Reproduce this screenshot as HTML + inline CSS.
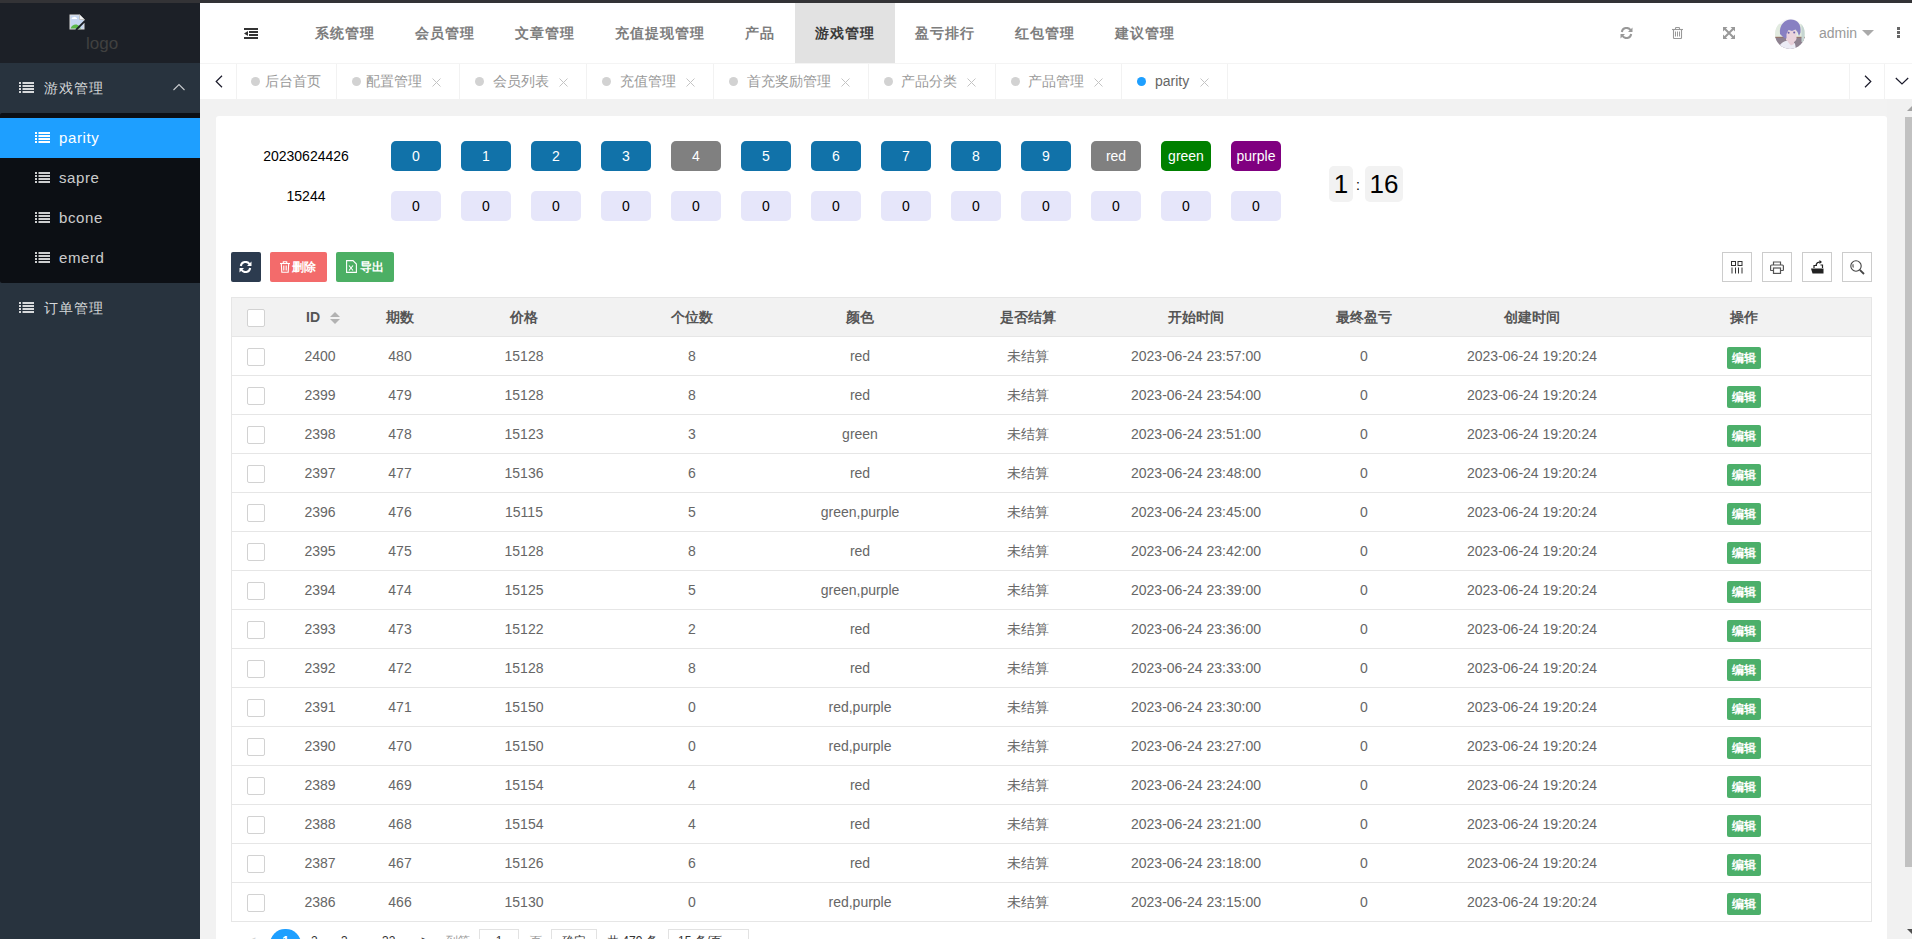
<!DOCTYPE html><html><head><meta charset="utf-8"><title>admin</title><style>
*{box-sizing:border-box;margin:0;padding:0}
html,body{width:1912px;height:939px;overflow:hidden;background:#f2f2f2;font-family:"Liberation Sans",sans-serif;font-size:14px;color:#666;position:relative}
.a{position:absolute}
.topbar{left:0;top:0;width:1912px;height:3px;background:#333336}
.side{left:0;top:3px;width:200px;height:936px;background:#28333e}
.logo{left:0;top:0;width:200px;height:60px;background:#1c2027}
.logo .t{left:86px;top:31px;font-size:17px;color:#404040;line-height:20px}
.mi{left:0;width:200px;height:50px;color:rgba(255,255,255,.82)}
.mi svg{position:absolute;left:19px;top:19px}
.mi .tx{position:absolute;left:44px;top:0;line-height:50px;font-size:14px;letter-spacing:1px;white-space:nowrap}
.child{left:0;top:110px;width:200px;height:170px;background:#0c0f14;border-radius:2px 0 0 2px}
.ci{left:0;width:200px;height:40px;color:rgba(255,255,255,.8)}
.ci svg{position:absolute;left:35px;top:14px}
.ci .tx{position:absolute;left:59px;top:0;line-height:40px;font-size:15px;letter-spacing:.6px}
.ci.on{background:#1e9fff;color:#fff}
.hdr{left:200px;top:3px;width:1712px;height:60px;background:#fff}
.nav{top:0;height:60px;line-height:60px;font-size:14px;letter-spacing:1px;font-weight:700;color:#7d7d7d;white-space:nowrap;text-align:center}
.nav.on{background:#e2e2e2;color:#3a3a3a}
.tabs{left:200px;top:63px;width:1712px;height:36px;background:#fff;border-top:1px solid #f4f4f4}
.sep{top:0;width:1px;height:35px;background:#f2f2f2}
.tab{top:0;height:35px;line-height:35px;white-space:nowrap;color:#999;font-size:14px}
.dot{width:9px;height:9px;border-radius:50%;background:#d2d2d2;top:13px}
.x{top:0;line-height:35px;color:#bbb;font-size:13px}
.card{left:216px;top:116px;width:1671px;height:900px;background:#fff;border-radius:3px}
.nb{width:50px;height:30px;border-radius:5px;text-align:center;line-height:30px;color:#fff;font-size:14px}
.nl{width:50px;height:30px;border-radius:5px;text-align:center;line-height:30px;color:#000;font-size:14px;background:#e6e6fa}
.btn{height:30px;line-height:30px;border-radius:2px;color:#fff;font-size:12px;white-space:nowrap;font-weight:bold}
.tool{width:30px;height:30px;border:1px solid #ccc;background:#fff}
.tbl{left:231px;top:297px;width:1641px;height:625px;border:1px solid #e6e6e6;background:#fff}
.th{left:0;top:0;width:1639px;height:39px;background:#f2f2f2;border-bottom:1px solid #e6e6e6}
.hc{top:0;height:38px;line-height:38px;text-align:center;font-weight:bold;color:#555;white-space:nowrap}
.row{left:0;width:1639px;height:39px;border-bottom:1px solid #e6e6e6}
.c{top:0;height:38px;line-height:38px;text-align:center;color:#666;white-space:nowrap}
.cb{width:18px;height:18px;border:1px solid #d2d2d2;border-radius:2px;background:#fff}
.edit{width:34px;height:22px;line-height:22px;background:#4caf6a;color:#fff;border-radius:2px;font-size:12px;text-align:center;font-weight:bold}
</style></head><body>
<div class="a topbar"></div>
<div class="a side">
<div class="a logo">
<svg class="a" style="left:69px;top:11px" width="16" height="16" viewBox="0 0 16 16"><path d="M0.5 0.5H10.5L15.5 5.5V15.5H0.5Z" fill="#dcdcdc"/><path d="M1.5 1.5H10V6H14.5V14.5H1.5Z" fill="#c5d6f0"/><path d="M1.5 14.5C3 10 8 9.5 10 12L12 14.5Z" fill="#5cb848"/><path d="M2.5 5C2.8 3.6 3.8 3 4.6 3.3C5.2 2.4 6.6 2.6 7 3.6C7.8 3.5 8.3 4.3 8 5Z" fill="#fff"/><path d="M10.5 0.5V5.5H15.5" fill="#f4f4f4" stroke="#aaa" stroke-width=".6"/><path d="M7 16L16 7" stroke="#1c2027" stroke-width="1.8"/></svg>
<div class="a t">logo</div>
</div>
<div class="a mi" style="top:60px"><svg width="15" height="11" viewBox="0 0 15 11"><g fill="currentColor"><rect x="0" y="0" width="2" height="2"/><rect x="3.5" y="0" width="11.5" height="2"/><rect x="0" y="3" width="2" height="2"/><rect x="3.5" y="3" width="11.5" height="2"/><rect x="0" y="6" width="2" height="2"/><rect x="3.5" y="6" width="11.5" height="2"/><rect x="0" y="9" width="2" height="2"/><rect x="3.5" y="9" width="11.5" height="2"/></g></svg><span class="tx">游戏管理</span><svg class="a" style="left:172px;top:20px" width="13" height="8" viewBox="0 0 13 8"><path d="M1.5 7L7 1.5L12.5 7" fill="none" stroke="rgba(255,255,255,.75)" stroke-width="1.1"/></svg></div>
<div class="a child">
<div class="a ci on" style="top:5px"><svg width="15" height="11" viewBox="0 0 15 11"><g fill="currentColor"><rect x="0" y="0" width="2" height="2"/><rect x="3.5" y="0" width="11.5" height="2"/><rect x="0" y="3" width="2" height="2"/><rect x="3.5" y="3" width="11.5" height="2"/><rect x="0" y="6" width="2" height="2"/><rect x="3.5" y="6" width="11.5" height="2"/><rect x="0" y="9" width="2" height="2"/><rect x="3.5" y="9" width="11.5" height="2"/></g></svg><span class="tx">parity</span></div>
<div class="a ci" style="top:45px"><svg width="15" height="11" viewBox="0 0 15 11"><g fill="currentColor"><rect x="0" y="0" width="2" height="2"/><rect x="3.5" y="0" width="11.5" height="2"/><rect x="0" y="3" width="2" height="2"/><rect x="3.5" y="3" width="11.5" height="2"/><rect x="0" y="6" width="2" height="2"/><rect x="3.5" y="6" width="11.5" height="2"/><rect x="0" y="9" width="2" height="2"/><rect x="3.5" y="9" width="11.5" height="2"/></g></svg><span class="tx">sapre</span></div>
<div class="a ci" style="top:85px"><svg width="15" height="11" viewBox="0 0 15 11"><g fill="currentColor"><rect x="0" y="0" width="2" height="2"/><rect x="3.5" y="0" width="11.5" height="2"/><rect x="0" y="3" width="2" height="2"/><rect x="3.5" y="3" width="11.5" height="2"/><rect x="0" y="6" width="2" height="2"/><rect x="3.5" y="6" width="11.5" height="2"/><rect x="0" y="9" width="2" height="2"/><rect x="3.5" y="9" width="11.5" height="2"/></g></svg><span class="tx">bcone</span></div>
<div class="a ci" style="top:125px"><svg width="15" height="11" viewBox="0 0 15 11"><g fill="currentColor"><rect x="0" y="0" width="2" height="2"/><rect x="3.5" y="0" width="11.5" height="2"/><rect x="0" y="3" width="2" height="2"/><rect x="3.5" y="3" width="11.5" height="2"/><rect x="0" y="6" width="2" height="2"/><rect x="3.5" y="6" width="11.5" height="2"/><rect x="0" y="9" width="2" height="2"/><rect x="3.5" y="9" width="11.5" height="2"/></g></svg><span class="tx">emerd</span></div>
</div>
<div class="a mi" style="top:280px"><svg width="15" height="11" viewBox="0 0 15 11"><g fill="currentColor"><rect x="0" y="0" width="2" height="2"/><rect x="3.5" y="0" width="11.5" height="2"/><rect x="0" y="3" width="2" height="2"/><rect x="3.5" y="3" width="11.5" height="2"/><rect x="0" y="6" width="2" height="2"/><rect x="3.5" y="6" width="11.5" height="2"/><rect x="0" y="9" width="2" height="2"/><rect x="3.5" y="9" width="11.5" height="2"/></g></svg><span class="tx">订单管理</span></div>
</div>
<div class="a hdr">
<svg class="a" style="left:44px;top:25px" width="14" height="11" viewBox="0 0 14 11"><g fill="#333"><rect x="0" y="0" width="14" height="2"/><rect x="5" y="3" width="9" height="2"/><rect x="5" y="6" width="9" height="2"/><rect x="0" y="9" width="14" height="2"/><path d="M0 5.5L4 3V8Z"/></g></svg>
<div class="a nav" style="left:95px;width:100px">系统管理</div>
<div class="a nav" style="left:195px;width:100px">会员管理</div>
<div class="a nav" style="left:295px;width:100px">文章管理</div>
<div class="a nav" style="left:395px;width:130px">充值提现管理</div>
<div class="a nav" style="left:525px;width:70px">产品</div>
<div class="a nav on" style="left:595px;width:100px">游戏管理</div>
<div class="a nav" style="left:695px;width:100px">盈亏排行</div>
<div class="a nav" style="left:795px;width:100px">红包管理</div>
<div class="a nav" style="left:895px;width:100px">建议管理</div>
<svg class="a" style="left:1420px;top:24px" width="13" height="12" viewBox="0 0 13 12"><g fill="none" stroke="#999" stroke-width="2"><path d="M1.8 5A4.8 4.8 0 0 1 10.6 3.2"/><path d="M11.2 7A4.8 4.8 0 0 1 2.4 8.8"/></g><g fill="#999"><path d="M12.5 0.5V5H8Z"/><path d="M0.5 11.5V7H5Z"/></g></svg>
<svg class="a" style="left:1472px;top:24px" width="12" height="12" viewBox="0 0 12 12"><g fill="none" stroke="#999" stroke-width="1.1"><path d="M0 2.5H11"/><path d="M3.5 2.4V1.3Q3.5 0.5 4.3 0.5H6.7Q7.5 0.5 7.5 1.3V2.4"/><path d="M1.5 2.8V10.8Q1.5 11.5 2.2 11.5H8.8Q9.5 11.5 9.5 10.8V2.8"/><path d="M3.5 4.5V9.5M5.5 4.5V9.5M7.5 4.5V9.5" stroke-width="1"/></g></svg>
<svg class="a" style="left:1523px;top:24px" width="12" height="12" viewBox="0 0 12 12"><g fill="#999"><path d="M0 0H4.5L0 4.5Z"/><path d="M12 0V4.5L7.5 0Z"/><path d="M0 12V7.5L4.5 12Z"/><path d="M12 12H7.5L12 7.5Z"/></g><g stroke="#999" stroke-width="2"><path d="M1.5 1.5L10.5 10.5M10.5 1.5L1.5 10.5"/></g></svg>
<svg class="a" style="left:1575px;top:16px" width="30" height="30" viewBox="0 0 30 30"><defs><clipPath id="cp"><circle cx="15" cy="15" r="15"/></clipPath></defs><g clip-path="url(#cp)"><rect width="30" height="30" fill="#f4f4f6"/><rect x="0" y="5" width="30" height="13.5" fill="#e2ebe0"/><rect x="0" y="18" width="30" height="12" fill="#8e8290"/><rect x="0" y="17.8" width="30" height="0.8" fill="#9a6f58"/><rect x="26.5" y="5" width="3" height="18" fill="#c6d6d2"/><path d="M3 30C4 25 9 22 13 21.5L17 23L20 24.5L21 30Z" fill="#ececf5"/><path d="M12.5 19L19 19L19 25L16 26.5L13 23Z" fill="#e8cfd8"/><path d="M11 12L21.5 11L21.5 20C20.5 23 17.5 24.5 14.5 23.5L11 21Z" fill="#ead3dc"/><path d="M5 15C4 6 9.5 0.5 16 0.5C22.5 0.5 26.5 5.5 25.5 13.5L24 17L22.5 13L20.5 10.5L17 12L13.5 11L11.5 15L11.5 19.5L9 19Z" fill="#8880c2"/><circle cx="13.6" cy="13.8" r="1" fill="#6a62a8"/><circle cx="19.2" cy="13.4" r="1" fill="#6a62a8"/></g></svg>
<div class="a" style="left:1619px;top:0;line-height:60px;font-size:14px;color:#999">admin</div>
<svg class="a" style="left:1662px;top:27px" width="12" height="6" viewBox="0 0 12 6"><path d="M0 0H12L6 6Z" fill="#aaa"/></svg>
<svg class="a" style="left:1697px;top:24px" width="3" height="11" viewBox="0 0 3 11"><g fill="#666"><rect y="0" width="3" height="3"/><rect y="4" width="3" height="3"/><rect y="8" width="3" height="3"/></g></svg>
</div>
<div class="a tabs">
<svg class="a" style="left:15px;top:11px" width="8" height="13" viewBox="0 0 8 13"><path d="M7 0.8L1.2 6.5L7 12.2" fill="none" stroke="#1a1a2a" stroke-width="1.2"/></svg>
<div class="a sep" style="left:36px"></div>
<div class="a sep" style="left:136px"></div>
<div class="a sep" style="left:259px"></div>
<div class="a sep" style="left:386px"></div>
<div class="a sep" style="left:513px"></div>
<div class="a sep" style="left:668px"></div>
<div class="a sep" style="left:795px"></div>
<div class="a sep" style="left:921px"></div>
<div class="a sep" style="left:1027px"></div>
<div class="a sep" style="left:1649px"></div>
<div class="a sep" style="left:1684px"></div>
<div class="a dot" style="left:51px;"></div>
<div class="a tab" style="left:65px;">后台首页</div>
<div class="a dot" style="left:152px;"></div>
<div class="a tab" style="left:166px;">配置管理</div>
<svg class="a" style="left:232px;top:14px" width="9" height="9" viewBox="0 0 9 9"><path d="M0.5 0.5L8.5 8.5M8.5 0.5L0.5 8.5" stroke="#c4c4c4" stroke-width="1"/></svg>
<div class="a dot" style="left:275px;"></div>
<div class="a tab" style="left:293px;">会员列表</div>
<svg class="a" style="left:359px;top:14px" width="9" height="9" viewBox="0 0 9 9"><path d="M0.5 0.5L8.5 8.5M8.5 0.5L0.5 8.5" stroke="#c4c4c4" stroke-width="1"/></svg>
<div class="a dot" style="left:402px;"></div>
<div class="a tab" style="left:420px;">充值管理</div>
<svg class="a" style="left:486px;top:14px" width="9" height="9" viewBox="0 0 9 9"><path d="M0.5 0.5L8.5 8.5M8.5 0.5L0.5 8.5" stroke="#c4c4c4" stroke-width="1"/></svg>
<div class="a dot" style="left:529px;"></div>
<div class="a tab" style="left:547px;">首充奖励管理</div>
<svg class="a" style="left:641px;top:14px" width="9" height="9" viewBox="0 0 9 9"><path d="M0.5 0.5L8.5 8.5M8.5 0.5L0.5 8.5" stroke="#c4c4c4" stroke-width="1"/></svg>
<div class="a dot" style="left:684px;"></div>
<div class="a tab" style="left:701px;">产品分类</div>
<svg class="a" style="left:767px;top:14px" width="9" height="9" viewBox="0 0 9 9"><path d="M0.5 0.5L8.5 8.5M8.5 0.5L0.5 8.5" stroke="#c4c4c4" stroke-width="1"/></svg>
<div class="a dot" style="left:811px;"></div>
<div class="a tab" style="left:828px;">产品管理</div>
<svg class="a" style="left:894px;top:14px" width="9" height="9" viewBox="0 0 9 9"><path d="M0.5 0.5L8.5 8.5M8.5 0.5L0.5 8.5" stroke="#c4c4c4" stroke-width="1"/></svg>
<div class="a dot" style="left:937px;background:#1e9fff"></div>
<div class="a tab" style="left:955px;color:#666">parity</div>
<svg class="a" style="left:1000px;top:14px" width="9" height="9" viewBox="0 0 9 9"><path d="M0.5 0.5L8.5 8.5M8.5 0.5L0.5 8.5" stroke="#c4c4c4" stroke-width="1"/></svg>
<svg class="a" style="left:1664px;top:11px" width="8" height="13" viewBox="0 0 8 13"><path d="M1 0.8L6.8 6.5L1 12.2" fill="none" stroke="#1a1a2a" stroke-width="1.2"/></svg>
<svg class="a" style="left:1695px;top:13px" width="14" height="8" viewBox="0 0 14 8"><path d="M0.8 1L7 7L13.2 1" fill="none" stroke="#1a1a2a" stroke-width="1.2"/></svg>
</div>
<div class="a card"></div>
<div class="a" style="left:231px;top:146px;width:150px;text-align:center;color:#000;line-height:20px">20230624426</div>
<div class="a" style="left:231px;top:186px;width:150px;text-align:center;color:#000;line-height:20px">15244</div>
<div class="a nb" style="left:391px;top:141px;background:#1172a9">0</div>
<div class="a nl" style="left:391px;top:191px">0</div>
<div class="a nb" style="left:461px;top:141px;background:#1172a9">1</div>
<div class="a nl" style="left:461px;top:191px">0</div>
<div class="a nb" style="left:531px;top:141px;background:#1172a9">2</div>
<div class="a nl" style="left:531px;top:191px">0</div>
<div class="a nb" style="left:601px;top:141px;background:#1172a9">3</div>
<div class="a nl" style="left:601px;top:191px">0</div>
<div class="a nb" style="left:671px;top:141px;background:#808080">4</div>
<div class="a nl" style="left:671px;top:191px">0</div>
<div class="a nb" style="left:741px;top:141px;background:#1172a9">5</div>
<div class="a nl" style="left:741px;top:191px">0</div>
<div class="a nb" style="left:811px;top:141px;background:#1172a9">6</div>
<div class="a nl" style="left:811px;top:191px">0</div>
<div class="a nb" style="left:881px;top:141px;background:#1172a9">7</div>
<div class="a nl" style="left:881px;top:191px">0</div>
<div class="a nb" style="left:951px;top:141px;background:#1172a9">8</div>
<div class="a nl" style="left:951px;top:191px">0</div>
<div class="a nb" style="left:1021px;top:141px;background:#1172a9">9</div>
<div class="a nl" style="left:1021px;top:191px">0</div>
<div class="a nb" style="left:1091px;top:141px;background:#808080">red</div>
<div class="a nl" style="left:1091px;top:191px">0</div>
<div class="a nb" style="left:1161px;top:141px;background:#008000">green</div>
<div class="a nl" style="left:1161px;top:191px">0</div>
<div class="a nb" style="left:1231px;top:141px;background:#800080">purple</div>
<div class="a nl" style="left:1231px;top:191px">0</div>
<div class="a" style="left:1329px;top:166px;width:24px;height:36px;background:#f2f2f2;border-radius:5px;font-size:26px;line-height:36px;text-align:center;color:#000">1</div>
<div class="a" style="left:1354px;top:175px;width:8px;font-size:14px;line-height:20px;text-align:center;color:#000">:</div>
<div class="a" style="left:1365px;top:166px;width:38px;height:36px;background:#f2f2f2;border-radius:5px;font-size:26px;line-height:36px;text-align:center;color:#000">16</div>
<div class="a btn" style="left:231px;top:252px;width:30px;background:#2c3b4f"><svg class="a" style="left:8px;top:9px" width="13" height="12" viewBox="0 0 13 12"><g fill="none" stroke="#fff" stroke-width="2"><path d="M1.8 5A4.8 4.8 0 0 1 10.6 3.2"/><path d="M11.2 7A4.8 4.8 0 0 1 2.4 8.8"/></g><g fill="#fff"><path d="M12.5 0.5V5H8Z"/><path d="M0.5 11.5V7H5Z"/></g></svg></div>
<div class="a btn" style="left:270px;top:252px;width:57px;background:#f36b6b"><svg class="a" style="left:10px;top:9px" width="10" height="12" viewBox="0 0 10 12"><g fill="none" stroke="#fff" stroke-width="1.1"><path d="M0 2.5H10"/><path d="M3.3 2.4V0.8H6.7V2.4"/><path d="M1.3 2.5L1.8 11.3H8.2L8.7 2.5"/><path d="M3.8 4.5V9.5M6.2 4.5V9.5"/></g></svg><span class="a" style="left:22px;top:0">删除</span></div>
<div class="a btn" style="left:336px;top:252px;width:58px;background:#4caf64"><svg class="a" style="left:10px;top:8px" width="11" height="13" viewBox="0 0 11 13"><g fill="none" stroke="#fff" stroke-width="1.1"><path d="M0.6 0.6H7L10.4 4V12.4H0.6Z"/><path d="M3 5.5L7 10.5M7 5.5L3 10.5"/></g></svg><span class="a" style="left:24px;top:0">导出</span></div>
<div class="a tool" style="left:1722px;top:252px"><svg class="a" style="left:8px;top:8px" width="12" height="13" viewBox="0 0 12 13"><g fill="none" stroke="#333" stroke-width="1"><rect x="0.5" y="0.5" width="4" height="4"/><rect x="7" y="0.5" width="4" height="4"/><path d="M1 6.5V12.5M4.5 6.5V12.5M7.5 6.5V12.5M11 6.5V12.5"/></g></svg></div>
<div class="a tool" style="left:1762px;top:252px"><svg class="a" style="left:7px;top:8px" width="14" height="13" viewBox="0 0 14 13"><g fill="none" stroke="#555" stroke-width="1.2"><path d="M3.5 4V1H10.5V4"/><path d="M3 9.5H1.2C0.8 9.5 0.6 9.2 0.6 8.8V5C0.6 4.4 1 4 1.6 4H12.4C13 4 13.4 4.4 13.4 5V8.8C13.4 9.2 13.2 9.5 12.8 9.5H11"/><rect x="3.5" y="7" width="7" height="5.4"/></g></svg></div>
<div class="a tool" style="left:1802px;top:252px"><svg class="a" style="left:8px;top:7px" width="13" height="14" viewBox="0 0 13 14"><g fill="#222"><path d="M0 8.5H12.5V13.5H1.5Z"/></g><g fill="none" stroke="#222" stroke-width="1.2"><path d="M3 8V5.5H6"/><path d="M11.5 8V5H9.5"/><path d="M5 5C5.5 3 7 2 9 2"/></g><path d="M8.5 0L11 2L8.5 4Z" fill="#222"/></svg></div>
<div class="a tool" style="left:1842px;top:252px"><svg class="a" style="left:7px;top:7px" width="15" height="15" viewBox="0 0 15 15"><g fill="none" stroke="#444" stroke-width="1.1"><circle cx="6" cy="6" r="5.2"/><path d="M3.2 4.2C2.8 5.2 2.8 6.5 3.4 7.6"/><path d="M9.8 9.8L14 14" stroke-width="1.8"/></g></svg></div>
<div class="a tbl">
<div class="a th">
<div class="a cb" style="left:15px;top:11px"></div>
<div class="a hc" style="left:48px;width:80px"></div>
<div class="a hc" style="left:74px;width:20px;text-align:left">ID</div>
<svg class="a" style="left:98px;top:14px" width="10" height="12" viewBox="0 0 10 12"><g fill="#b2b2b2"><path d="M0 5L5 0L10 5Z"/><path d="M0 7H10L5 12Z"/></g></svg>
<div class="a hc" style="left:128px;width:80px">期数</div>
<div class="a hc" style="left:208px;width:168px">价格</div>
<div class="a hc" style="left:376px;width:168px">个位数</div>
<div class="a hc" style="left:544px;width:168px">颜色</div>
<div class="a hc" style="left:712px;width:168px">是否结算</div>
<div class="a hc" style="left:880px;width:168px">开始时间</div>
<div class="a hc" style="left:1048px;width:168px">最终盈亏</div>
<div class="a hc" style="left:1216px;width:168px">创建时间</div>
<div class="a hc" style="left:1384px;width:255px">操作</div>
</div>
<div class="a row" style="top:39px">
<div class="a cb" style="left:15px;top:11px"></div>
<div class="a c" style="left:48px;width:80px">2400</div>
<div class="a c" style="left:128px;width:80px">480</div>
<div class="a c" style="left:208px;width:168px">15128</div>
<div class="a c" style="left:376px;width:168px">8</div>
<div class="a c" style="left:544px;width:168px">red</div>
<div class="a c" style="left:712px;width:168px">未结算</div>
<div class="a c" style="left:880px;width:168px">2023-06-24 23:57:00</div>
<div class="a c" style="left:1048px;width:168px">0</div>
<div class="a c" style="left:1216px;width:168px">2023-06-24 19:20:24</div>
<div class="a edit" style="left:1495px;top:10px">编辑</div>
</div>
<div class="a row" style="top:78px">
<div class="a cb" style="left:15px;top:11px"></div>
<div class="a c" style="left:48px;width:80px">2399</div>
<div class="a c" style="left:128px;width:80px">479</div>
<div class="a c" style="left:208px;width:168px">15128</div>
<div class="a c" style="left:376px;width:168px">8</div>
<div class="a c" style="left:544px;width:168px">red</div>
<div class="a c" style="left:712px;width:168px">未结算</div>
<div class="a c" style="left:880px;width:168px">2023-06-24 23:54:00</div>
<div class="a c" style="left:1048px;width:168px">0</div>
<div class="a c" style="left:1216px;width:168px">2023-06-24 19:20:24</div>
<div class="a edit" style="left:1495px;top:10px">编辑</div>
</div>
<div class="a row" style="top:117px">
<div class="a cb" style="left:15px;top:11px"></div>
<div class="a c" style="left:48px;width:80px">2398</div>
<div class="a c" style="left:128px;width:80px">478</div>
<div class="a c" style="left:208px;width:168px">15123</div>
<div class="a c" style="left:376px;width:168px">3</div>
<div class="a c" style="left:544px;width:168px">green</div>
<div class="a c" style="left:712px;width:168px">未结算</div>
<div class="a c" style="left:880px;width:168px">2023-06-24 23:51:00</div>
<div class="a c" style="left:1048px;width:168px">0</div>
<div class="a c" style="left:1216px;width:168px">2023-06-24 19:20:24</div>
<div class="a edit" style="left:1495px;top:10px">编辑</div>
</div>
<div class="a row" style="top:156px">
<div class="a cb" style="left:15px;top:11px"></div>
<div class="a c" style="left:48px;width:80px">2397</div>
<div class="a c" style="left:128px;width:80px">477</div>
<div class="a c" style="left:208px;width:168px">15136</div>
<div class="a c" style="left:376px;width:168px">6</div>
<div class="a c" style="left:544px;width:168px">red</div>
<div class="a c" style="left:712px;width:168px">未结算</div>
<div class="a c" style="left:880px;width:168px">2023-06-24 23:48:00</div>
<div class="a c" style="left:1048px;width:168px">0</div>
<div class="a c" style="left:1216px;width:168px">2023-06-24 19:20:24</div>
<div class="a edit" style="left:1495px;top:10px">编辑</div>
</div>
<div class="a row" style="top:195px">
<div class="a cb" style="left:15px;top:11px"></div>
<div class="a c" style="left:48px;width:80px">2396</div>
<div class="a c" style="left:128px;width:80px">476</div>
<div class="a c" style="left:208px;width:168px">15115</div>
<div class="a c" style="left:376px;width:168px">5</div>
<div class="a c" style="left:544px;width:168px">green,purple</div>
<div class="a c" style="left:712px;width:168px">未结算</div>
<div class="a c" style="left:880px;width:168px">2023-06-24 23:45:00</div>
<div class="a c" style="left:1048px;width:168px">0</div>
<div class="a c" style="left:1216px;width:168px">2023-06-24 19:20:24</div>
<div class="a edit" style="left:1495px;top:10px">编辑</div>
</div>
<div class="a row" style="top:234px">
<div class="a cb" style="left:15px;top:11px"></div>
<div class="a c" style="left:48px;width:80px">2395</div>
<div class="a c" style="left:128px;width:80px">475</div>
<div class="a c" style="left:208px;width:168px">15128</div>
<div class="a c" style="left:376px;width:168px">8</div>
<div class="a c" style="left:544px;width:168px">red</div>
<div class="a c" style="left:712px;width:168px">未结算</div>
<div class="a c" style="left:880px;width:168px">2023-06-24 23:42:00</div>
<div class="a c" style="left:1048px;width:168px">0</div>
<div class="a c" style="left:1216px;width:168px">2023-06-24 19:20:24</div>
<div class="a edit" style="left:1495px;top:10px">编辑</div>
</div>
<div class="a row" style="top:273px">
<div class="a cb" style="left:15px;top:11px"></div>
<div class="a c" style="left:48px;width:80px">2394</div>
<div class="a c" style="left:128px;width:80px">474</div>
<div class="a c" style="left:208px;width:168px">15125</div>
<div class="a c" style="left:376px;width:168px">5</div>
<div class="a c" style="left:544px;width:168px">green,purple</div>
<div class="a c" style="left:712px;width:168px">未结算</div>
<div class="a c" style="left:880px;width:168px">2023-06-24 23:39:00</div>
<div class="a c" style="left:1048px;width:168px">0</div>
<div class="a c" style="left:1216px;width:168px">2023-06-24 19:20:24</div>
<div class="a edit" style="left:1495px;top:10px">编辑</div>
</div>
<div class="a row" style="top:312px">
<div class="a cb" style="left:15px;top:11px"></div>
<div class="a c" style="left:48px;width:80px">2393</div>
<div class="a c" style="left:128px;width:80px">473</div>
<div class="a c" style="left:208px;width:168px">15122</div>
<div class="a c" style="left:376px;width:168px">2</div>
<div class="a c" style="left:544px;width:168px">red</div>
<div class="a c" style="left:712px;width:168px">未结算</div>
<div class="a c" style="left:880px;width:168px">2023-06-24 23:36:00</div>
<div class="a c" style="left:1048px;width:168px">0</div>
<div class="a c" style="left:1216px;width:168px">2023-06-24 19:20:24</div>
<div class="a edit" style="left:1495px;top:10px">编辑</div>
</div>
<div class="a row" style="top:351px">
<div class="a cb" style="left:15px;top:11px"></div>
<div class="a c" style="left:48px;width:80px">2392</div>
<div class="a c" style="left:128px;width:80px">472</div>
<div class="a c" style="left:208px;width:168px">15128</div>
<div class="a c" style="left:376px;width:168px">8</div>
<div class="a c" style="left:544px;width:168px">red</div>
<div class="a c" style="left:712px;width:168px">未结算</div>
<div class="a c" style="left:880px;width:168px">2023-06-24 23:33:00</div>
<div class="a c" style="left:1048px;width:168px">0</div>
<div class="a c" style="left:1216px;width:168px">2023-06-24 19:20:24</div>
<div class="a edit" style="left:1495px;top:10px">编辑</div>
</div>
<div class="a row" style="top:390px">
<div class="a cb" style="left:15px;top:11px"></div>
<div class="a c" style="left:48px;width:80px">2391</div>
<div class="a c" style="left:128px;width:80px">471</div>
<div class="a c" style="left:208px;width:168px">15150</div>
<div class="a c" style="left:376px;width:168px">0</div>
<div class="a c" style="left:544px;width:168px">red,purple</div>
<div class="a c" style="left:712px;width:168px">未结算</div>
<div class="a c" style="left:880px;width:168px">2023-06-24 23:30:00</div>
<div class="a c" style="left:1048px;width:168px">0</div>
<div class="a c" style="left:1216px;width:168px">2023-06-24 19:20:24</div>
<div class="a edit" style="left:1495px;top:10px">编辑</div>
</div>
<div class="a row" style="top:429px">
<div class="a cb" style="left:15px;top:11px"></div>
<div class="a c" style="left:48px;width:80px">2390</div>
<div class="a c" style="left:128px;width:80px">470</div>
<div class="a c" style="left:208px;width:168px">15150</div>
<div class="a c" style="left:376px;width:168px">0</div>
<div class="a c" style="left:544px;width:168px">red,purple</div>
<div class="a c" style="left:712px;width:168px">未结算</div>
<div class="a c" style="left:880px;width:168px">2023-06-24 23:27:00</div>
<div class="a c" style="left:1048px;width:168px">0</div>
<div class="a c" style="left:1216px;width:168px">2023-06-24 19:20:24</div>
<div class="a edit" style="left:1495px;top:10px">编辑</div>
</div>
<div class="a row" style="top:468px">
<div class="a cb" style="left:15px;top:11px"></div>
<div class="a c" style="left:48px;width:80px">2389</div>
<div class="a c" style="left:128px;width:80px">469</div>
<div class="a c" style="left:208px;width:168px">15154</div>
<div class="a c" style="left:376px;width:168px">4</div>
<div class="a c" style="left:544px;width:168px">red</div>
<div class="a c" style="left:712px;width:168px">未结算</div>
<div class="a c" style="left:880px;width:168px">2023-06-24 23:24:00</div>
<div class="a c" style="left:1048px;width:168px">0</div>
<div class="a c" style="left:1216px;width:168px">2023-06-24 19:20:24</div>
<div class="a edit" style="left:1495px;top:10px">编辑</div>
</div>
<div class="a row" style="top:507px">
<div class="a cb" style="left:15px;top:11px"></div>
<div class="a c" style="left:48px;width:80px">2388</div>
<div class="a c" style="left:128px;width:80px">468</div>
<div class="a c" style="left:208px;width:168px">15154</div>
<div class="a c" style="left:376px;width:168px">4</div>
<div class="a c" style="left:544px;width:168px">red</div>
<div class="a c" style="left:712px;width:168px">未结算</div>
<div class="a c" style="left:880px;width:168px">2023-06-24 23:21:00</div>
<div class="a c" style="left:1048px;width:168px">0</div>
<div class="a c" style="left:1216px;width:168px">2023-06-24 19:20:24</div>
<div class="a edit" style="left:1495px;top:10px">编辑</div>
</div>
<div class="a row" style="top:546px">
<div class="a cb" style="left:15px;top:11px"></div>
<div class="a c" style="left:48px;width:80px">2387</div>
<div class="a c" style="left:128px;width:80px">467</div>
<div class="a c" style="left:208px;width:168px">15126</div>
<div class="a c" style="left:376px;width:168px">6</div>
<div class="a c" style="left:544px;width:168px">red</div>
<div class="a c" style="left:712px;width:168px">未结算</div>
<div class="a c" style="left:880px;width:168px">2023-06-24 23:18:00</div>
<div class="a c" style="left:1048px;width:168px">0</div>
<div class="a c" style="left:1216px;width:168px">2023-06-24 19:20:24</div>
<div class="a edit" style="left:1495px;top:10px">编辑</div>
</div>
<div class="a row" style="top:585px">
<div class="a cb" style="left:15px;top:11px"></div>
<div class="a c" style="left:48px;width:80px">2386</div>
<div class="a c" style="left:128px;width:80px">466</div>
<div class="a c" style="left:208px;width:168px">15130</div>
<div class="a c" style="left:376px;width:168px">0</div>
<div class="a c" style="left:544px;width:168px">red,purple</div>
<div class="a c" style="left:712px;width:168px">未结算</div>
<div class="a c" style="left:880px;width:168px">2023-06-24 23:15:00</div>
<div class="a c" style="left:1048px;width:168px">0</div>
<div class="a c" style="left:1216px;width:168px">2023-06-24 19:20:24</div>
<div class="a edit" style="left:1495px;top:10px">编辑</div>
</div>
</div>
<div class="a" style="left:270px;top:929px;width:31px;height:30px;border-radius:15px;background:#1e9fff"></div>
<div class="a" style="left:249px;top:926px;font-size:14px;color:#d2d2d2;line-height:30px;font-size:12px">&lt;</div>
<div class="a" style="left:270px;top:926px;width:31px;color:#fff;text-align:center;line-height:30px;font-size:12px;font-weight:bold">1</div>
<div class="a" style="left:311px;top:926px;color:#333;line-height:30px;font-size:12px">2</div>
<div class="a" style="left:341px;top:926px;color:#333;line-height:30px;font-size:12px">3</div>
<div class="a" style="left:362px;top:926px;color:#333;line-height:30px;font-size:12px">…</div>
<div class="a" style="left:382px;top:926px;color:#333;line-height:30px;font-size:12px">32</div>
<div class="a" style="left:421px;top:926px;color:#333;line-height:30px;font-size:12px">&gt;</div>
<div class="a" style="left:446px;top:926px;color:#999;line-height:30px;font-size:12px">到第</div>
<div class="a" style="left:479px;top:929px;width:40px;height:30px;border:1px solid #e2e2e2;"></div>
<div class="a" style="left:479px;top:926px;width:40px;text-align:center;line-height:30px;font-size:12px;color:#333">1</div>
<div class="a" style="left:530px;top:926px;color:#999;line-height:30px;font-size:12px">页</div>
<div class="a" style="left:551px;top:929px;width:46px;height:30px;border:1px solid #e2e2e2;"></div>
<div class="a" style="left:551px;top:926px;width:46px;text-align:center;line-height:30px;font-size:12px;color:#333">确定</div>
<div class="a" style="left:607px;top:926px;color:#333;line-height:30px;font-size:12px">共 479 条</div>
<div class="a" style="left:668px;top:929px;width:81px;height:30px;border:1px solid #e2e2e2;"></div>
<div class="a" style="left:678px;top:926px;line-height:30px;font-size:12px;color:#333">15 条/页</div>
<div class="a" style="left:1887px;top:99px;width:25px;height:840px;background:#f1f1f1"></div>
<div class="a" style="left:1905px;top:117px;width:7px;height:750px;background:#c1c1c1"></div>
<svg class="a" style="left:1907px;top:106px" width="5" height="5" viewBox="0 0 5 5"><path d="M0 5L5 0L10 5Z" fill="#a3a3a3"/></svg>
<svg class="a" style="left:1907px;top:929px" width="5" height="5" viewBox="0 0 5 5"><path d="M0 0H10L5 5Z" fill="#505050"/></svg>
</body></html>
